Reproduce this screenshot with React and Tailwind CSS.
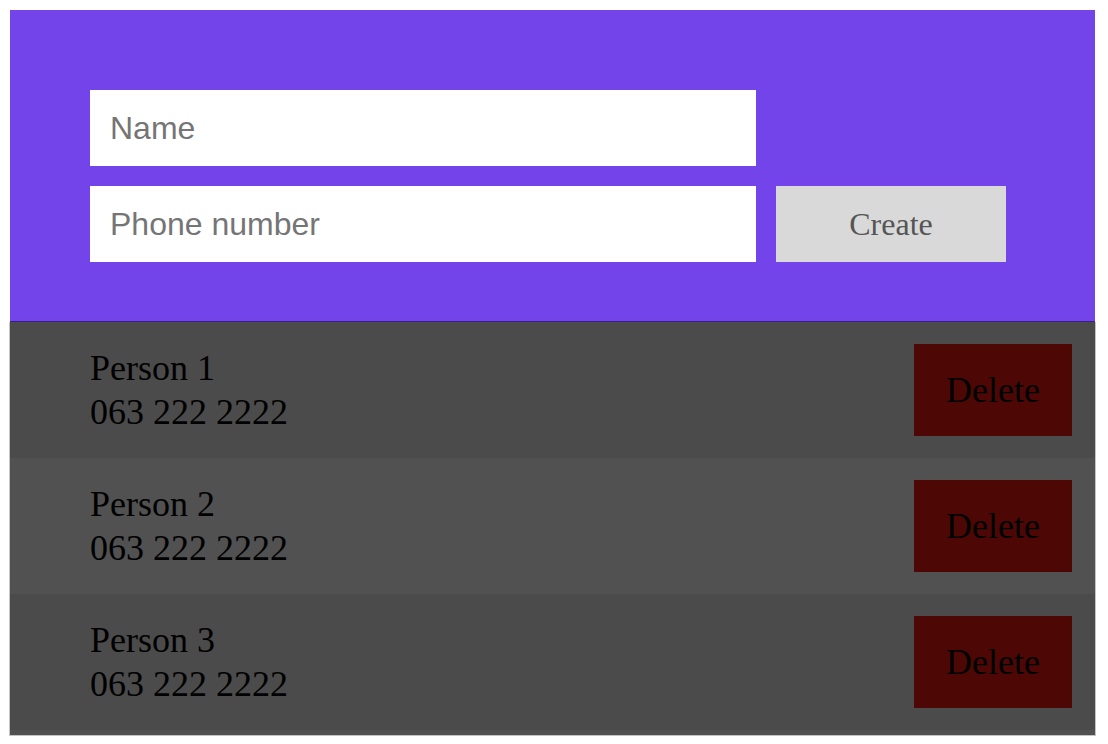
const people = [
  { name: "Person 1", phone: "063 222 2222" },
  { name: "Person 2", phone: "063 222 2222" },
  { name: "Person 3", phone: "063 222 2222" },
];

const serif = { fontFamily: '"Liberation Serif", "Times New Roman", serif' };

export default function App() {
  return (
    <div className="bg-white w-[1108px] h-[744px] pt-[10px] pl-[10px]">
      <div className="w-[1085px]">
        <form
          onSubmit={(e) => e.preventDefault()}
          className="bg-[#7344ea] border-b border-[#3a1d8f] pt-[80px] pl-[80px] pb-[59px] grid grid-cols-[666px_230px] gap-x-[20px] gap-y-[20px]"
        >
          <input
            placeholder="Name"
            className="col-start-1 h-[76px] bg-white px-[20px] text-[32px] text-black placeholder:text-[#757575] outline-none font-['Liberation_Sans',Arial,sans-serif]"
          />
          <div />
          <input
            placeholder="Phone number"
            className="h-[76px] bg-white px-[20px] text-[32px] text-black placeholder:text-[#757575] outline-none font-['Liberation_Sans',Arial,sans-serif]"
          />
          <button
            type="submit"
            className="h-[76px] bg-[#d9d9d9] text-[#555555] text-[32px]"
            style={serif}
          >
            Create
          </button>
        </form>

        <div className="-ml-px w-[1087px] border-x border-b border-[#c4c4c4] bg-[#515151] pb-[5px]">
          {people.map((p, i) => (
            <div
              key={i}
              className={`h-[136px] flex items-center justify-between pl-[80px] pr-[23px] ${
                i % 2 === 0 ? "bg-[#4b4b4b]" : "bg-[#515151]"
              }`}
            >
              <div className="text-[36px] leading-[44px] text-black" style={serif}>
                <div>{p.name}</div>
                <div>{p.phone}</div>
              </div>
              <button
                className="w-[158px] h-[92px] bg-[#4d0806] text-black text-[36px]"
                style={serif}
              >
                Delete
              </button>
            </div>
          ))}
        </div>
      </div>
    </div>
  );
}
